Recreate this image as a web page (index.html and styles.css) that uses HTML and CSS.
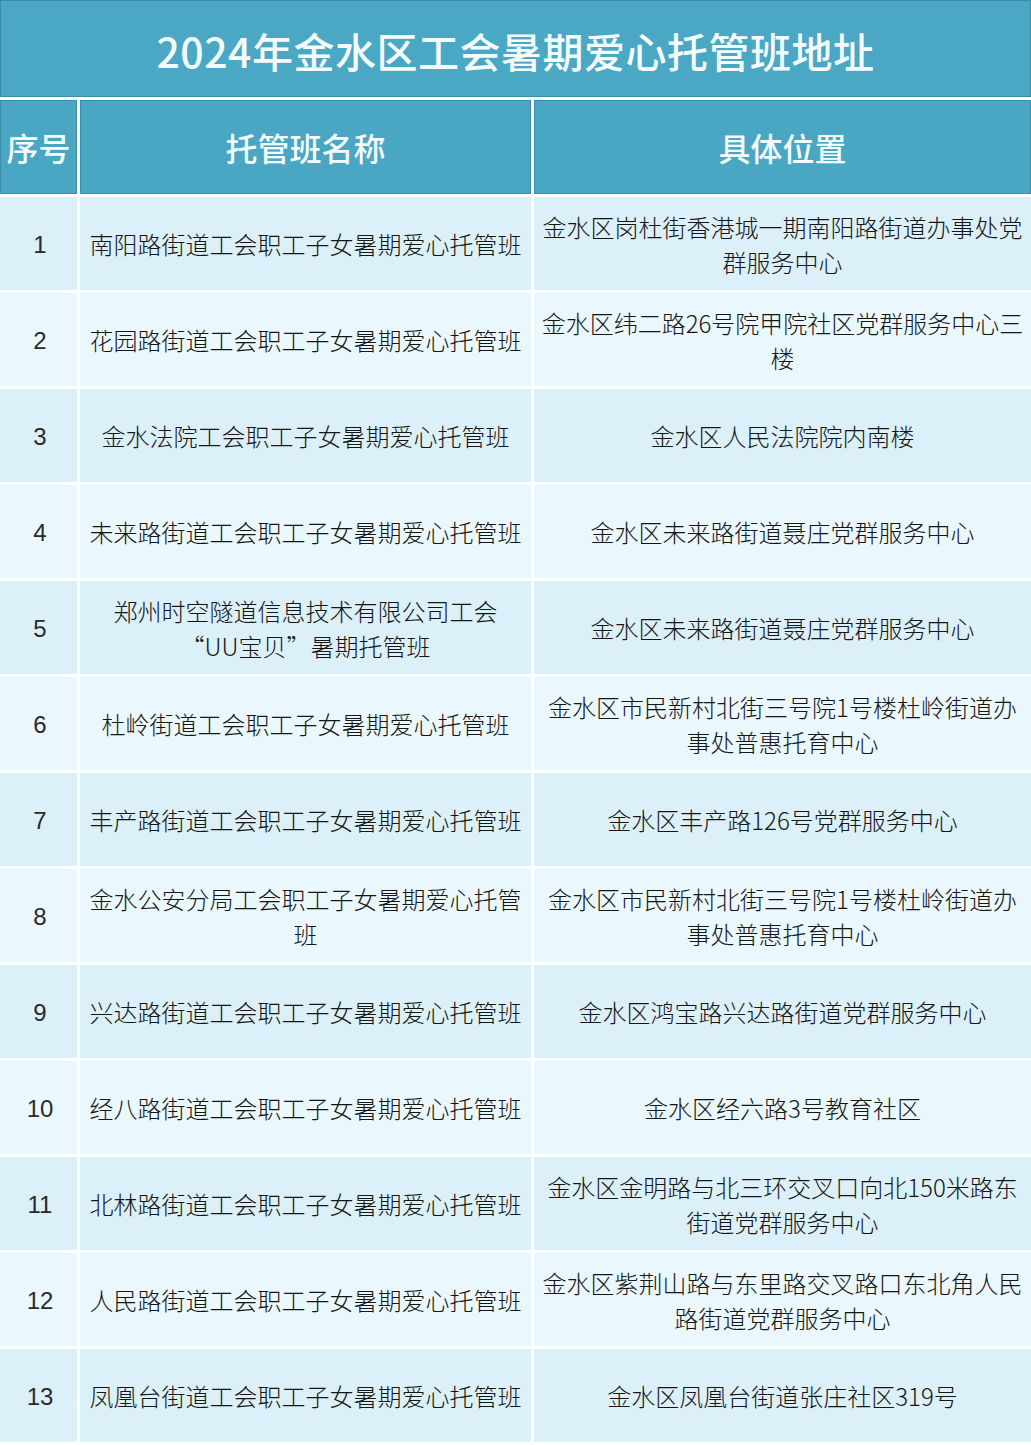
FILE: index.html
```html
<!DOCTYPE html>
<html lang="zh-CN">
<head>
<meta charset="utf-8">
<title>2024年金水区工会暑期爱心托管班地址</title>
<link rel="stylesheet" href="styles.css">
</head>
<body>
<div class="table">
  <div class="title">2024年金水区工会暑期爱心托管班地址</div>
  <div class="th">序号</div>
  <div class="th">托管班名称</div>
  <div class="th">具体位置</div>

  <div class="td num odd">1</div>
  <div class="td odd">南阳路街道工会职工子女暑期爱心托管班</div>
  <div class="td odd">金水区岗杜街香港城一期南阳路街道办事处党群服务中心</div>

  <div class="td num even">2</div>
  <div class="td even">花园路街道工会职工子女暑期爱心托管班</div>
  <div class="td even">金水区纬二路26号院甲院社区党群服务中心三楼</div>

  <div class="td num odd">3</div>
  <div class="td odd">金水法院工会职工子女暑期爱心托管班</div>
  <div class="td odd">金水区人民法院院内南楼</div>

  <div class="td num even">4</div>
  <div class="td even">未来路街道工会职工子女暑期爱心托管班</div>
  <div class="td even">金水区未来路街道聂庄党群服务中心</div>

  <div class="td num odd">5</div>
  <div class="td odd">郑州时空隧道信息技术有限公司工会<br>“UU宝贝”暑期托管班</div>
  <div class="td odd">金水区未来路街道聂庄党群服务中心</div>

  <div class="td num even">6</div>
  <div class="td even">杜岭街道工会职工子女暑期爱心托管班</div>
  <div class="td even">金水区市民新村北街三号院1号楼杜岭街道办事处普惠托育中心</div>

  <div class="td num odd">7</div>
  <div class="td odd">丰产路街道工会职工子女暑期爱心托管班</div>
  <div class="td odd">金水区丰产路126号党群服务中心</div>

  <div class="td num even">8</div>
  <div class="td even">金水公安分局工会职工子女暑期爱心托管班</div>
  <div class="td even">金水区市民新村北街三号院1号楼杜岭街道办事处普惠托育中心</div>

  <div class="td num odd">9</div>
  <div class="td odd">兴达路街道工会职工子女暑期爱心托管班</div>
  <div class="td odd">金水区鸿宝路兴达路街道党群服务中心</div>

  <div class="td num even">10</div>
  <div class="td even">经八路街道工会职工子女暑期爱心托管班</div>
  <div class="td even">金水区经六路3号教育社区</div>

  <div class="td num odd">11</div>
  <div class="td odd">北林路街道工会职工子女暑期爱心托管班</div>
  <div class="td odd">金水区金明路与北三环交叉口向北150米路东街道党群服务中心</div>

  <div class="td num even">12</div>
  <div class="td even">人民路街道工会职工子女暑期爱心托管班</div>
  <div class="td even">金水区紫荆山路与东里路交叉路口东北角人民路街道党群服务中心</div>

  <div class="td num odd">13</div>
  <div class="td odd">凤凰台街道工会职工子女暑期爱心托管班</div>
  <div class="td odd">金水区凤凰台街道张庄社区319号</div>
</div>
</body>
</html>
```
FILE: styles.css
```css
html, body {
  margin: 0;
  padding: 0;
  background: #ffffff;
}

body {
  font-family: "Noto Sans CJK SC", "Noto Sans", sans-serif;
  color: #151515;
}

.table {
  width: 1031px;
  display: grid;
  grid-template-columns: 77px 451px 497px;
  grid-template-rows: 97px 94px repeat(13, 93px);
  column-gap: 3px;
  row-gap: 3px;
  background: #ffffff;
}

.title {
  grid-column: 1 / -1;
  display: flex;
  align-items: center;
  justify-content: center;
  background: #4aa8c4;
  border: 1px solid #3b8ea9;
  color: #f4fbfd;
  font-size: 41px;
  font-weight: 500;
  letter-spacing: 0.5px;
  padding-top: 2px;
}

.th {
  display: flex;
  align-items: center;
  justify-content: center;
  background: #49a7c3;
  border: 1px solid #3b8ea9;
  color: #f4fbfd;
  font-size: 32px;
  font-weight: 500;
}

.td {
  display: flex;
  align-items: center;
  justify-content: center;
  text-align: center;
  font-size: 24px;
  font-weight: 300;
  line-height: 35px;
  padding: 0 6px;
}

.num {
  font-family: "Liberation Sans", Arial, sans-serif;
  font-size: 24px;
  font-weight: 400;
  color: #2a2a2a;
  padding: 2px 0 0 3px;
}

.odd {
  background: #dcf0f9;
}

.even {
  background: #eaf7fc;
}
```
